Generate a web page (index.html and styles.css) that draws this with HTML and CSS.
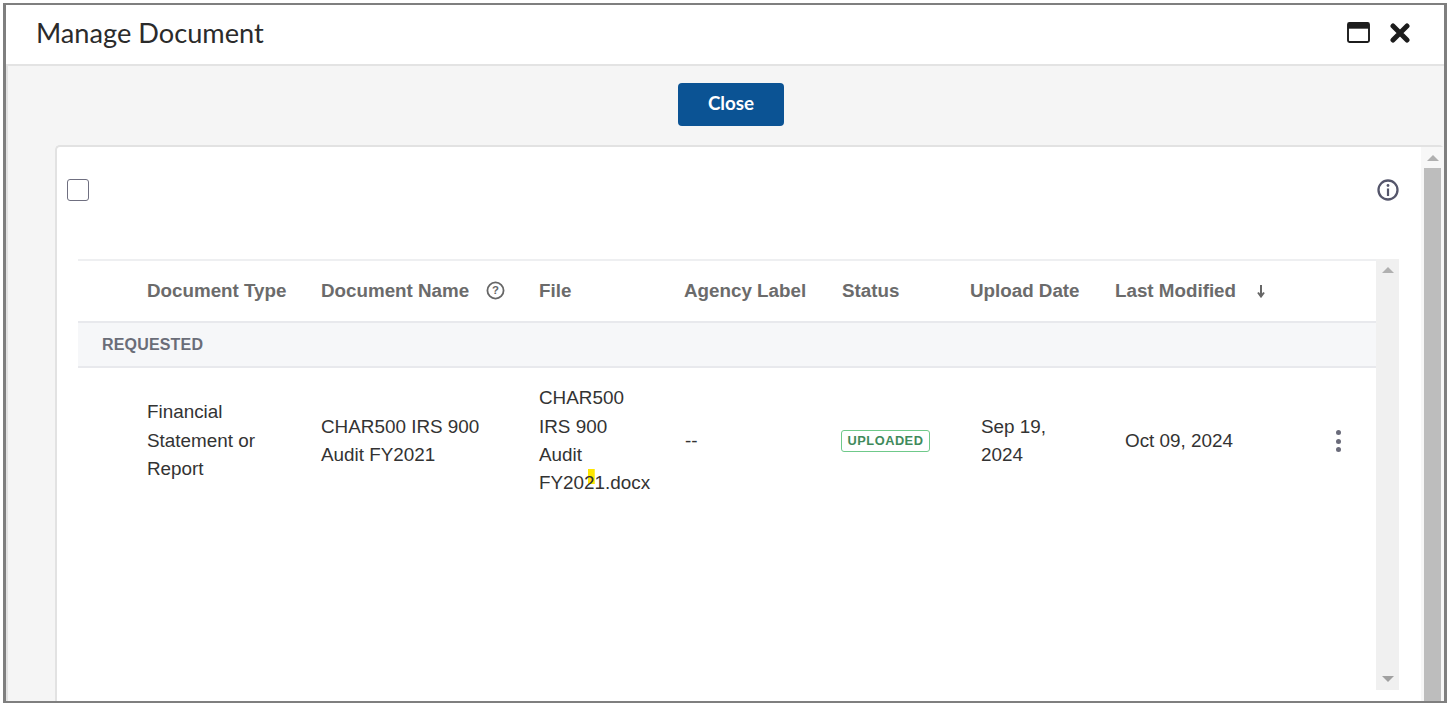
FILE: index.html
```html
<!DOCTYPE html>
<html lang="en">
<head>
<meta charset="utf-8">
<title>Manage Document</title>
<link rel="stylesheet" href="styles.css">
</head>
<body>
<div class="frame">
  <header class="modal-head">
    <h1 class="modal-title">Manage Document</h1>
    <div class="modal-actions">
      <svg class="icon-max" viewBox="0 0 24 22"><rect x="1" y="1" width="22" height="20" rx="1.5" fill="none" stroke="#1c1c1c" stroke-width="2"/><rect x="1" y="1" width="22" height="6" fill="#1c1c1c"/></svg>
      <svg class="icon-close" viewBox="0 0 20 20"><path d="M3 3 17 17M17 3 3 17" fill="none" stroke="#1c1c1c" stroke-width="5" stroke-linecap="round"/></svg>
    </div>
  </header>
  <div class="modal-body">
    <div class="btn-row"><button class="btn-close">Close</button></div>
    <section class="card">
      <div class="card-main">
        <div class="toolbar">
          <span class="checkbox"></span>
          <svg class="icon-info" viewBox="0 0 22 22"><circle cx="11" cy="11" r="9.5" fill="none" stroke="#55566b" stroke-width="2.3"/><rect x="9.9" y="9.5" width="2.2" height="7.5" fill="#55566b"/><circle cx="11" cy="6.5" r="1.4" fill="#55566b"/></svg>
        </div>
        <div class="table-wrap">
          <div class="table">
            <div class="grid head-row">
              <div></div>
              <div>Document Type</div>
              <div class="with-icon">Document Name
                <svg class="icon-help" viewBox="0 0 20 20"><circle cx="10" cy="10" r="8.5" fill="none" stroke="#666" stroke-width="1.9"/><text x="10" y="14" text-anchor="middle" class="help-mark">?</text></svg>
              </div>
              <div>File</div>
              <div>Agency Label</div>
              <div>Status</div>
              <div>Upload Date</div>
              <div class="with-icon sort">Last Modified
                <svg class="icon-sort" viewBox="0 0 10 14"><path d="M5 1V12M2 8.5 5 12.5 8 8.5" fill="none" stroke="#666" stroke-width="2"/></svg>
              </div>
              <div></div>
            </div>
            <div class="group-row">REQUESTED</div>
            <div class="grid data-row">
              <div></div>
              <div>Financial<br>Statement or<br>Report</div>
              <div>CHAR500 IRS 900<br>Audit FY2021</div>
              <div>CHAR500<br>IRS 900<br>Audit<br>FY20<span class="mark">2</span>1.docx</div>
              <div class="dash">--</div>
              <div><span class="badge">UPLOADED</span></div>
              <div class="indent">Sep 19,<br>2024</div>
              <div class="indent-modified">Oct 09, 2024</div>
              <div class="kebab"><i></i><i></i><i></i></div>
            </div>
          </div>
          <div class="scroll inner-scroll"><span class="arrow up"></span><span class="arrow down"></span></div>
        </div>
      </div>
      <div class="scroll outer-scroll"><span class="arrow up"></span><span class="thumb"></span></div>
    </section>
  </div>
</div>
</body>
</html>
```
FILE: styles.css
```css
* { box-sizing: border-box; }
html, body { margin: 0; height: 704px; overflow: hidden; background: #fff; }
body { padding: 3px 1px 1px 3px; font-family: "Liberation Sans", Arial, sans-serif; }
.frame {
  height: 700px;
  border: solid #7f7f7f;
  border-width: 2px 3px 2px 3px;
  display: flex;
  flex-direction: column;
  overflow: hidden;
  background: #fff;
}
.modal-head {
  height: 61px;
  flex: none;
  display: flex;
  align-items: center;
  justify-content: space-between;
  padding: 0 34px 4px 30px;
  border-bottom: 2px solid #e3e3e3;
}
.modal-title { margin: 0; font: 400 27.2px "Lato", sans-serif; color: #2b2b2b; }
.modal-actions { display: flex; align-items: center; gap: 20px; }
.icon-max { width: 23px; height: 21px; display: block; }
.icon-close { width: 20px; height: 20px; display: block; }
.modal-body {
  flex: 1;
  min-height: 0;
  background: #f5f5f5;
  border-left: 2px solid #e2e2e2;
  display: flex;
  flex-direction: column;
}
.btn-row { display: flex; justify-content: center; padding: 17px 0 19px 10px; }
.btn-close {
  width: 106px;
  height: 43px;
  padding: 0 0 4px;
  border: 0;
  border-radius: 4px;
  background: #0b5394;
  color: #fff;
  font: 700 18.8px "Lato", sans-serif;
}
.card {
  flex: 1;
  min-height: 0;
  margin-left: 47px;
  background: #fff;
  border: solid #e2e2e2;
  border-width: 2px 0 0 2px;
  border-top-left-radius: 5px;
  border-top-right-radius: 5px;
  display: flex;
}
.card-main { flex: 1; min-width: 0; }
.toolbar {
  height: 112px;
  display: flex;
  align-items: flex-start;
  justify-content: space-between;
  padding: 32px 22px 0 10px;
}
.checkbox {
  width: 22px;
  height: 22px;
  border: 1.5px solid #6f6f80;
  border-radius: 3px;
  background: #fff;
}
.icon-info { width: 22px; height: 22px; display: block; }
.table-wrap { display: flex; height: 431px; margin-left: 21px; margin-right: 22px; }
.table { flex: 1; min-width: 0; }
.grid {
  display: grid;
  grid-template-columns: 69px 174px 218px 145px 158px 128px 145px 165px 1fr;
}
.head-row {
  height: 64px;
  padding-bottom: 1px;
  align-items: center;
  border-top: 2px solid #eeeff1;
  border-bottom: 2px solid #e8e9ed;
  font-size: 18.8px;
  font-weight: 700;
  color: #6b6b6b;
}
.with-icon { display: flex; align-items: center; gap: 17px; }
.sort { gap: 20px; }
.icon-help { width: 19px; height: 19px; display: block; }
.help-mark { font: 700 12px "Liberation Sans", sans-serif; fill: #666; }
.icon-sort { width: 10px; height: 14px; display: block; }
.group-row {
  height: 45px;
  display: flex;
  align-items: center;
  padding-left: 24px;
  background: #f6f7f9;
  border-bottom: 2px solid #e8e9ed;
  font-size: 16px;
  font-weight: 700;
  letter-spacing: 0.17px;
  color: #6a6d78;
}
.data-row {
  height: 146px;
  align-items: center;
  font-size: 18.87px;
  line-height: 28.4px;
  color: #333;
}
.mark {
  padding-top: 3px;
  background: linear-gradient(to right, transparent 35%, #ffe600 35%) top / 100% 15px no-repeat;
}
.dash { padding-left: 1px; }
.badge {
  display: block;
  width: 89px;
  height: 22px;
  margin: 0 0 0 -1px;
  border: 1.5px solid #6fc98a;
  border-radius: 3px;
  font-size: 12.8px;
  line-height: 19px;
  font-weight: 700;
  letter-spacing: 0.5px;
  text-align: center;
  color: #3f8a5b;
}
.indent { padding-left: 11px; }
.indent-modified { padding-left: 10px; }
.kebab {
  display: flex;
  flex-direction: column;
  align-items: center;
  gap: 3.5px;
  padding-left: 20px;
}
.kebab i { width: 5px; height: 5px; border-radius: 50%; background: #6a6b7a; }
.scroll { position: relative; flex: none; }
.inner-scroll { width: 23px; background: #f0f0f0; }
.outer-scroll { width: 23px; background: #f7f7f7; }
.thumb { position: absolute; top: 21px; bottom: 0; left: 3px; width: 17px; background: #bdbdbd; }
.arrow { position: absolute; left: 50%; margin-left: -6px; width: 0; height: 0; border-left: 6px solid transparent; border-right: 6px solid transparent; }
.up { top: 8px; border-bottom: 6px solid #b0b0b0; }
.down { bottom: 8px; border-top: 6px solid #a0a0a0; }
```
